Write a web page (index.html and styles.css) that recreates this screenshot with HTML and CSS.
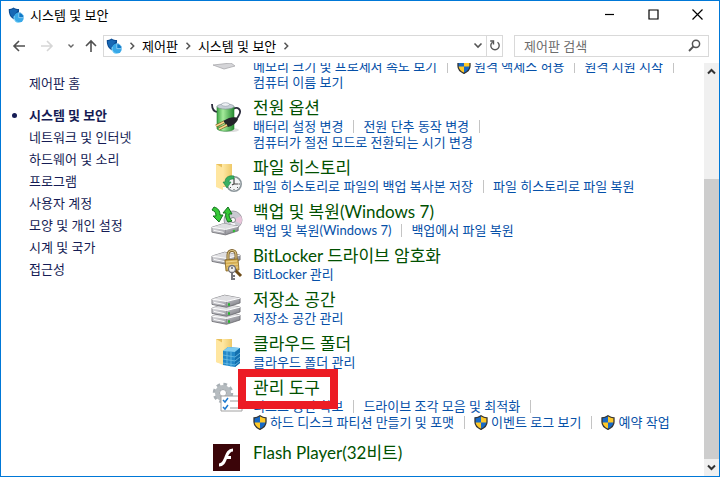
FILE: index.html
```
<!DOCTYPE html>
<html lang="ko">
<head>
    <meta charset="UTF-8">
    <meta name="viewport" content="width=device-width, initial-scale=1.0">
    <title>시스템 및 보안</title>
    <link rel="stylesheet" href="styles.css">
</head>
<body>

    <svg class="defs" aria-hidden="true">
        <defs>
            <linearGradient id="metal" x1="0" y1="0" x2="1" y2="1">
                <stop offset="0" stop-color="#f2f2f4"/>
                <stop offset=".5" stop-color="#b4b4ba"/>
                <stop offset="1" stop-color="#77777e"/>
            </linearGradient>
            <linearGradient id="green" x1="0" x2="1">
                <stop offset="0" stop-color="#3da544"/>
                <stop offset=".35" stop-color="#a5eb9b"/>
                <stop offset="1" stop-color="#258b31"/>
            </linearGradient>
            <linearGradient id="folder" x1="0" x2="1">
                <stop offset="0" stop-color="#ffeaa8"/>
                <stop offset="1" stop-color="#efc968"/>
            </linearGradient>
        </defs>
        <symbol id="uac" viewBox="0 0 14 15">
            <path d="M7 .5C5 2 3 2.600 1 2.600V7c0 3.500 3 6 6 7.500 3-1.500 6-4 6-7.500V2.600C11 2.600 9 2 7 .5z" fill="#ffc928"/>
            <path d="M7 .5C5 2 3 2.600 1 2.600V7.500h6zM7 7.500v7c3-1.500 6-4 6-7z" fill="#1769c6"/>
            <path d="M7 .8C5 2.200 3 2.800 1 2.800V7c0 3.500 3 6 6 7.400 3-1.400 6-3.900 6-7.400V2.800C11 2.800 9 2.200 7 .8z" fill="none" stroke="#353535" stroke-width="1.300"/>
        </symbol>
        <symbol id="security" viewBox="0 0 16 16">
            <path d="M5.500.5C4 1.600 2 2 .8 2 .6 7 2 10 6 12.500 10 10 11.400 7 11 2 9 2 7 1.600 5.500.5z" fill="#0b4b92"/>
            <path d="M6 1.500C5 2.300 3 3 1.800 3c0 3 .8 5.500 2.700 7.200L10 3C8 3 7 2.500 6 1.500z" fill="#1768b5"/>
            <circle cx="10.800" cy="10.600" r="5" fill="#38a8e8"/>
            <path d="M10.800 10.600V5.600a5 5 0 0 1 5 5z" fill="#127bc8" stroke="#c4ebff" stroke-width=".6"/>
            <path d="M6.200 9a5 5 0 0 0 4.600 6.600" fill="none" stroke="#8ad9fa" stroke-width="1"/>
        </symbol>
        <symbol id="drive" viewBox="0 0 32 14">
            <path d="M1 5 14 1l16 3v5l-14 4.500L1 10.500z" fill="url(#metal)" stroke="#66666c" stroke-width=".8"/>
            <path d="M1 5 14 1l16 3-14 3.500z" fill="#dedee1"/>
            <path d="M1 5l15 2.500L30 4" fill="none" stroke="#fff" stroke-width="1"/>
            <path d="M16 8v5" stroke="#8a8a90" stroke-width=".8"/>
            <path d="M3 8.500l11 2.200" stroke="#fff"/>
        </symbol>
        <symbol id="chevron" viewBox="0 0 8 10">
            <path d="M2.500 1.800 5.700 5 2.500 8.200" fill="none" stroke="#555" stroke-width="1.500"/>
        </symbol>
    </svg>

    <div class="window">
        <header class="titlebar">
            <svg class="icon-16"><use href="#security"/></svg>
            <h1 class="window-title">시스템 및 보안</h1>
            <div class="window-controls">
                <button type="button" aria-label="최소화"><svg width="11" height="11"><path d="M1 5.500h9" stroke="#000" stroke-width="1.200"/></svg></button>
                <button type="button" aria-label="최대화"><svg width="11" height="11"><path d="M1 1h9v9H1z" fill="none" stroke="#000" stroke-width="1.200"/></svg></button>
                <button type="button" aria-label="닫기"><svg width="11" height="11"><path d="M.5.5l10 10M10.500.5l-10 10" stroke="#000" stroke-width="1.200"/></svg></button>
            </div>
        </header>

        <div class="toolbar">
            <div class="history">
                <button type="button" aria-label="뒤로"><svg width="14" height="12"><path d="M13 6H2M7 1 2 6l5 5" fill="none" stroke="#505050" stroke-width="1.600"/></svg></button>
                <button type="button" aria-label="앞으로" disabled><svg width="14" height="12"><path d="M1 6h11M7 1l5 5-5 5" fill="none" stroke="#d6d6d6" stroke-width="1.600"/></svg></button>
                <button type="button" class="recent" aria-label="최근 위치"><svg width="8" height="6"><path d="M1.500 1.500 4 4l2.500-2.500" fill="none" stroke="#666" stroke-width="1.400"/></svg></button>
                <button type="button" class="up" aria-label="위로"><svg width="12" height="14"><path d="M6 13V2M1 7l5-5 5 5" fill="none" stroke="#505050" stroke-width="1.600"/></svg></button>
            </div>
            <nav class="address" aria-label="주소">
                <svg class="icon-16"><use href="#security"/></svg>
                <svg class="chevron"><use href="#chevron"/></svg>
                <a href="#">제어판</a>
                <svg class="chevron"><use href="#chevron"/></svg>
                <a href="#">시스템 및 보안</a>
                <svg class="chevron"><use href="#chevron"/></svg>
                <button type="button" class="drop" aria-label="이전 위치"><svg width="10" height="7"><path d="M1.500 1.500 5 5l3.500-3.500" fill="none" stroke="#555" stroke-width="1.600"/></svg></button>
                <button type="button" class="refresh" aria-label="새로 고침"><svg width="12" height="13"><path d="M8.500 3.200A4.200 4.200 0 1 1 3.500 3.200M1.200 2h3.300v3.500" fill="none" stroke="#555" stroke-width="1.400"/></svg></button>
            </nav>
            <form class="search">
                <input type="search" placeholder="제어판 검색" aria-label="제어판 검색">
                <button type="button" aria-label="검색"><svg width="13" height="13"><circle cx="8" cy="4.800" r="3.600" fill="none" stroke="#555" stroke-width="1.500"/><path d="M5.400 7.500 1 12" stroke="#555" stroke-width="1.800"/></svg></button>
            </form>
        </div>

        <div class="body">
            <nav class="sidebar">
                <a class="home" href="#">제어판 홈</a>
                <ul>
                    <li class="current"><a href="#">시스템 및 보안</a></li>
                    <li><a href="#">네트워크 및 인터넷</a></li>
                    <li><a href="#">하드웨어 및 소리</a></li>
                    <li><a href="#">프로그램</a></li>
                    <li><a href="#">사용자 계정</a></li>
                    <li><a href="#">모양 및 개인 설정</a></li>
                    <li><a href="#">시계 및 국가</a></li>
                    <li><a href="#">접근성</a></li>
                </ul>
            </nav>

            <main class="content">
                <div class="items">
                    <section class="item scrolled">
                        <svg class="item-icon" viewBox="0 0 32 32">
                            <path d="M2 24l18-2 4 3-11 3z" fill="#d5d5d8" stroke="#a9a9ad" stroke-width=".8"/>
                        </svg>
                        <div>
                            <div class="links">
                                <a href="#">메모리 크기 및 프로세서 속도 보기</a><i></i>
                                <a href="#"><svg class="uac"><use href="#uac"/></svg>원격 액세스 허용</a><i></i>
                                <a href="#">원격 지원 시작</a><i></i>
                            </div>
                            <div class="links"><a href="#">컴퓨터 이름 보기</a></div>
                        </div>
                    </section>

                    <section class="item">
                        <svg class="item-icon" viewBox="0 0 32 32">
                            <ellipse cx="19" cy="29" rx="9" ry="2" fill="#ddd"/>
                            <path d="M1 3c0 5 2 8 6 8M22 8c5-3 9 1 6 6-1 3-3 4-5 6" fill="none" stroke="#2b2b3c" stroke-width="1.800"/>
                            <path d="M6 5.500h17V28c-3 3-14 3-17 0z" fill="url(#green)" stroke="#258331" stroke-width=".6"/>
                            <ellipse cx="14.500" cy="5.500" rx="8.500" ry="2.600" fill="#c6ced6" stroke="#7d8a92" stroke-width=".6"/>
                            <ellipse cx="14.500" cy="3.500" rx="4" ry="1.800" fill="#eef1f4" stroke="#8b98a2" stroke-width=".6"/>
                            <path d="M12 20l6-3c4-1 8-1 9 1-1 4-6 7-10 8z" fill="#232329"/>
                            <path d="M13 21l-8 4M16 24l-8 4" stroke="#7a5920" stroke-width="2.800"/>
                            <path d="M13 21l-8 4M16 24l-8 4" stroke="#f4d68c" stroke-width="1.500"/>
                        </svg>
                        <div>
                            <h2><a href="#">전원 옵션</a></h2>
                            <div class="links">
                                <a href="#">배터리 설정 변경</a><i></i>
                                <a href="#">전원 단추 동작 변경</a><i></i>
                            </div>
                            <div class="links"><a href="#">컴퓨터가 절전 모드로 전환되는 시기 변경</a></div>
                        </div>
                    </section>

                    <section class="item">
                        <svg class="item-icon" viewBox="0 0 32 32">
                            <path d="M5 3h15v22l-9 1-6-1z" fill="#e8bf5c"/>
                            <path d="M11 3h10v22H11z" fill="url(#folder)"/>
                            <path d="M5 3l7 4v22l-7-3z" fill="#ffe6a0"/>
                            <circle cx="23" cy="23" r="7.200" fill="#f2f4f5" stroke="#8c969b" stroke-width="1.600"/>
                            <path d="M23 18v5h4.500M23 23l-2 1" fill="none" stroke="#444" stroke-width="1.200"/>
                            <path d="M23 17v1M29 23h-1M23 29v-1M19 27l1-1M27 27l-1-1" stroke="#555"/>
                            <path d="M23 15c-6-1-9 2-9 6h-2l4 6 4-6h-2c0-2 1-3 5-3z" fill="#39b062" stroke="#1c8041" stroke-width=".6"/>
                        </svg>
                        <div>
                            <h2><a href="#">파일 히스토리</a></h2>
                            <div class="links">
                                <a href="#">파일 히스토리로 파일의 백업 복사본 저장</a><i></i>
                                <a href="#">파일 히스토리로 파일 복원</a>
                            </div>
                        </div>
                    </section>

                    <section class="item">
                        <svg class="item-icon" viewBox="0 0 32 32">
                            <circle cx="22" cy="15" r="9" fill="#c9c9d1" stroke="#8a8a92" stroke-width=".8"/>
                            <path d="M22 15l8-4a9 9 0 0 1 0 8z" fill="#e9c4da"/>
                            <path d="M22 15l-5 8a9 9 0 0 0 9 0z" fill="#f6f6fa"/>
                            <circle cx="22" cy="15" r="2.500" fill="#fff" stroke="#88888e"/>
                            <use href="#drive" x="0" y="17" width="29" height="14"/>
                            <circle cx="23" cy="26" r="1.300" fill="#2fba35"/>
                            <path d="M3 2c4 1 6 4 6 8h3l-4 7-6-6h3c0-3-1-5-4-6z" fill="#35c936" stroke="#12701d" stroke-width="1"/>
                            <path d="M17 17c-2-3-3-6-2-9h-3l5-6 4 7h-3c0 3 1 5 3 7z" fill="#35c936" stroke="#12701d" stroke-width="1"/>
                        </svg>
                        <div>
                            <h2><a href="#">백업 및 복원(Windows 7)</a></h2>
                            <div class="links">
                                <a href="#">백업 및 복원(Windows 7)</a><i></i>
                                <a href="#">백업에서 파일 복원</a>
                            </div>
                        </div>
                    </section>

                    <section class="item">
                        <svg class="item-icon" viewBox="0 0 32 32">
                            <use href="#drive" x="0" y="2" width="31" height="14"/>
                            <path d="M17 12V6c0-6 8-6 8 0v6" fill="none" stroke="#80632a" stroke-width="3"/>
                            <path d="M17 12V6c0-6 8-6 8 0v6" fill="none" stroke="#dac486" stroke-width="1.200"/>
                            <path d="M14 11l13-1 1 11-13 1z" fill="#d5ad52" stroke="#84631f" stroke-width=".8"/>
                            <path d="M15 13l11-1M15 16l12-1M16 19l11-1" stroke="#f0d68d"/>
                            <path d="M23 20l7 7" stroke="#6e4c18" stroke-width="3"/>
                            <path d="M21 19v12M21 27h3M21 30h3" stroke="#77777d" stroke-width="2"/>
                            <circle cx="21" cy="20" r="3.500" fill="#eee" stroke="#707078" stroke-width="1.300"/>
                            <circle cx="21" cy="19" r="1" fill="#666"/>
                        </svg>
                        <div>
                            <h2><a href="#">BitLocker 드라이브 암호화</a></h2>
                            <div class="links"><a href="#">BitLocker 관리</a></div>
                        </div>
                    </section>

                    <section class="item">
                        <svg class="item-icon" viewBox="0 0 32 32">
                            <use href="#drive" x="0" y="18" width="31" height="14"/>
                            <use href="#drive" x="0" y="10" width="31" height="14"/>
                            <use href="#drive" x="0" y="1" width="31" height="14"/>
                            <path d="M17 11.500h2M17 20.500h2M17 28.500h2" stroke="#25b52b" stroke-width="2.500"/>
                        </svg>
                        <div>
                            <h2><a href="#">저장소 공간</a></h2>
                            <div class="links"><a href="#">저장소 공간 관리</a></div>
                        </div>
                    </section>

                    <section class="item">
                        <svg class="item-icon" viewBox="0 0 32 32">
                            <path d="M5 2h15v23l-9 1-6-1z" fill="#e8bf5c"/>
                            <path d="M11 2h10v23H11z" fill="url(#folder)"/>
                            <path d="M5 2l7 4v22l-7-3z" fill="#ffe6a0"/>
                            <path d="M12 14l5-4 12 1v15l-5 4-12-2z" fill="#2388c8"/>
                            <path d="M12 14l5-4 12 1-5 4z" fill="#7dcbf0"/>
                            <path d="M24 15l5-4v15l-5 4z" fill="#1470ae"/>
                            <path d="M12 18l12 2 5-4M12 22l12 2 5-4M12 26l12 2 5-4M16 14v15M20 15v15" fill="none" stroke="#6dbfe6" stroke-width=".8"/>
                        </svg>
                        <div>
                            <h2><a href="#">클라우드 폴더</a></h2>
                            <div class="links"><a href="#">클라우드 폴더 관리</a></div>
                        </div>
                    </section>

                    <section class="item">
                        <svg class="item-icon" viewBox="0 0 32 32">
                            <circle cx="12" cy="12" r="8.500" fill="none" stroke="#a9b0b5" stroke-width="3.500" stroke-dasharray="3.500 3.200"/>
                            <circle cx="12" cy="12" r="5.800" fill="none" stroke="#b6bcc0" stroke-width="4.500"/>
                            <circle cx="12" cy="12" r="3.500" fill="#fff" stroke="#8a9196" stroke-width=".8"/>
                            <path d="M10 15h21v15H10z" fill="#fff" stroke="#a2a2a2"/>
                            <path d="M12 19l2 2 3-4M12 26l2 2 3-4" fill="none" stroke="#1c79cf" stroke-width="1.500"/>
                            <path d="M19 20h9M19 27h9" stroke="#9a9a9a"/>
                        </svg>
                        <div>
                            <h2 class="marked"><a href="#">관리 도구</a></h2>
                            <div class="links">
                                <a href="#">디스크 공간 확보</a><i></i>
                                <a href="#">드라이브 조각 모음 및 최적화</a><i></i>
                            </div>
                            <div class="links">
                                <a href="#"><svg class="uac"><use href="#uac"/></svg>하드 디스크 파티션 만들기 및 포맷</a><i></i>
                                <a href="#"><svg class="uac"><use href="#uac"/></svg>이벤트 로그 보기</a><i></i>
                                <a href="#"><svg class="uac"><use href="#uac"/></svg>예약 작업</a>
                            </div>
                        </div>
                    </section>

                    <section class="item single">
                        <svg class="item-icon" viewBox="0 0 32 32">
                            <path d="M2 3h27v27H2z" fill="#3b0509"/>
                            <path d="M22 9c-5 0-6 5-7.500 8.500S12 24 8 24M14 16.500h6" fill="none" stroke="#fff" stroke-width="3"/>
                        </svg>
                        <div>
                            <h2><a href="#">Flash Player(32비트)</a></h2>
                        </div>
                    </section>
                </div>
            </main>

            <div class="scrollbar">
                <button type="button" aria-label="위로 스크롤"><svg width="9" height="7"><path d="M1 5.500 4.500 2 8 5.500" fill="none" stroke="#333" stroke-width="2"/></svg></button>
                <div class="track"><div class="thumb"></div></div>
                <button type="button" aria-label="아래로 스크롤"><svg width="9" height="7"><path d="M1 1.500 4.500 5 8 1.500" fill="none" stroke="#333" stroke-width="2"/></svg></button>
            </div>
        </div>
    </div>

</body>
</html>
```
FILE: styles.css
```
*,
*::before,
*::after {
    box-sizing: border-box;
}
body {
    margin: 0;
    font-family: Lato, "Noto Sans CJK KR", sans-serif;
    font-size: 13px;
    line-height: 16px;
    color: #000;
    background-color: #fff;
}
a {
    color: inherit;
    text-decoration: none;
}
.links a:hover,
h2 a:hover,
.sidebar a:hover {
    text-decoration: underline;
}
button {
    display: flex;
    align-items: center;
    justify-content: center;
    padding: 0;
    border: none;
    background: none;
}
svg {
    display: block;
    flex: none;
}
.defs {
    position: absolute;
    width: 0;
    height: 0;
}
.icon-16 {
    width: 16px;
    height: 16px;
}
.window {
    display: flex;
    flex-direction: column;
    height: 100vh;
    border: 1px solid #0078d7;
    overflow: hidden;
}

/* title bar */
.titlebar {
    display: flex;
    align-items: center;
    gap: 6px;
    height: 27px;
    padding-left: 7px;
}
.window-title {
    margin: 0;
    font-size: 13px;
    font-weight: 400;
}
.window-controls {
    display: flex;
    align-self: stretch;
    margin-left: auto;
}
.window-controls button {
    width: 44px;
}

/* navigation */
.toolbar {
    display: flex;
    align-items: center;
    height: 35px;
    padding-right: 10px;
}
.history {
    display: flex;
    align-items: center;
    width: 102px;
    padding-left: 4px;
}
.history button {
    width: 28px;
    height: 22px;
}
.history .recent,
.history .up {
    width: 20px;
}
.address,
.search {
    display: flex;
    align-items: center;
    height: 22px;
    border: 1px solid #d9d9d9;
}
.address {
    flex: 1;
    padding-left: 2px;
}
.chevron {
    width: 8px;
    height: 10px;
    margin: 0 6px;
}
.drop {
    width: 16px;
    height: 20px;
    margin-left: auto;
}
.refresh {
    width: 16px;
    height: 20px;
    border-left: 1px solid #d9d9d9;
}
.search {
    width: 195px;
    margin-left: 11px;
    padding: 0 7px 0 9px;
}
.search input {
    flex: 1;
    min-width: 0;
    padding: 0;
    border: none;
    outline: none;
    font: inherit;
    color: #000;
}
.search input::placeholder {
    color: #6d6d6d;
}

/* page */
.body {
    display: flex;
    flex: 1;
    min-height: 0;
}
.sidebar {
    width: 210px;
    padding: 12px 0 0 28px;
    color: #151c55;
}
.home {
    display: block;
}
.sidebar ul {
    margin: 13px 0 0;
    padding: 0;
    list-style: none;
}
.sidebar li {
    height: 22px;
    line-height: 22px;
}
.sidebar .current {
    display: flex;
    align-items: center;
    gap: 12px;
    margin-left: -17px;
    font-weight: 700;
}
.current::before {
    content: "";
    width: 5px;
    height: 5px;
    border-radius: 50%;
    background-color: #151c55;
}

/* the list is scrolled to its end */
.content {
    display: flex;
    flex: 1;
    flex-direction: column;
    justify-content: flex-end;
    min-width: 0;
    padding-bottom: 3px;
    overflow: hidden;
    white-space: nowrap;
}
.items {
    display: flex;
    flex: none;
    flex-direction: column;
    gap: 8px;
}
.item {
    display: flex;
    gap: 10px;
}
.item-icon {
    width: 32px;
    height: 32px;
    margin-top: 3px;
    margin-bottom: -3px;
}
.item h2 {
    margin: 0;
    font-size: 17px;
    font-weight: 400;
    line-height: 20px;
    color: #005000;
}
.scrolled .item-icon {
    margin-top: -17px;
}
.single .item-icon {
    margin-bottom: 0;
}
.single h2 {
    padding-top: 5px;
}
.links {
    display: flex;
    align-items: center;
    height: 16px;
    color: #0550a8;
}
.links a {
    display: flex;
    align-items: center;
}
.links i {
    width: 1px;
    height: 13px;
    margin: 0 9px 0 10px;
    background-color: #c4c4c4;
}
.uac {
    width: 14px;
    height: 15px;
    margin-right: 3px;
}
.marked {
    position: relative;
}
.marked::after {
    content: "";
    position: absolute;
    top: -9px;
    left: -15px;
    width: 100px;
    height: 40px;
    border: 8px solid #ec1c24;
}

/* scroll bar */
.scrollbar {
    display: flex;
    flex-direction: column;
    width: 15px;
    background-color: #f0f0f0;
}
.scrollbar button {
    height: 17px;
}
.track {
    display: flex;
    flex: 1;
    flex-direction: column;
    justify-content: flex-end;
}
.thumb {
    height: 74%;
    background-color: #cdcdcd;
}
```
